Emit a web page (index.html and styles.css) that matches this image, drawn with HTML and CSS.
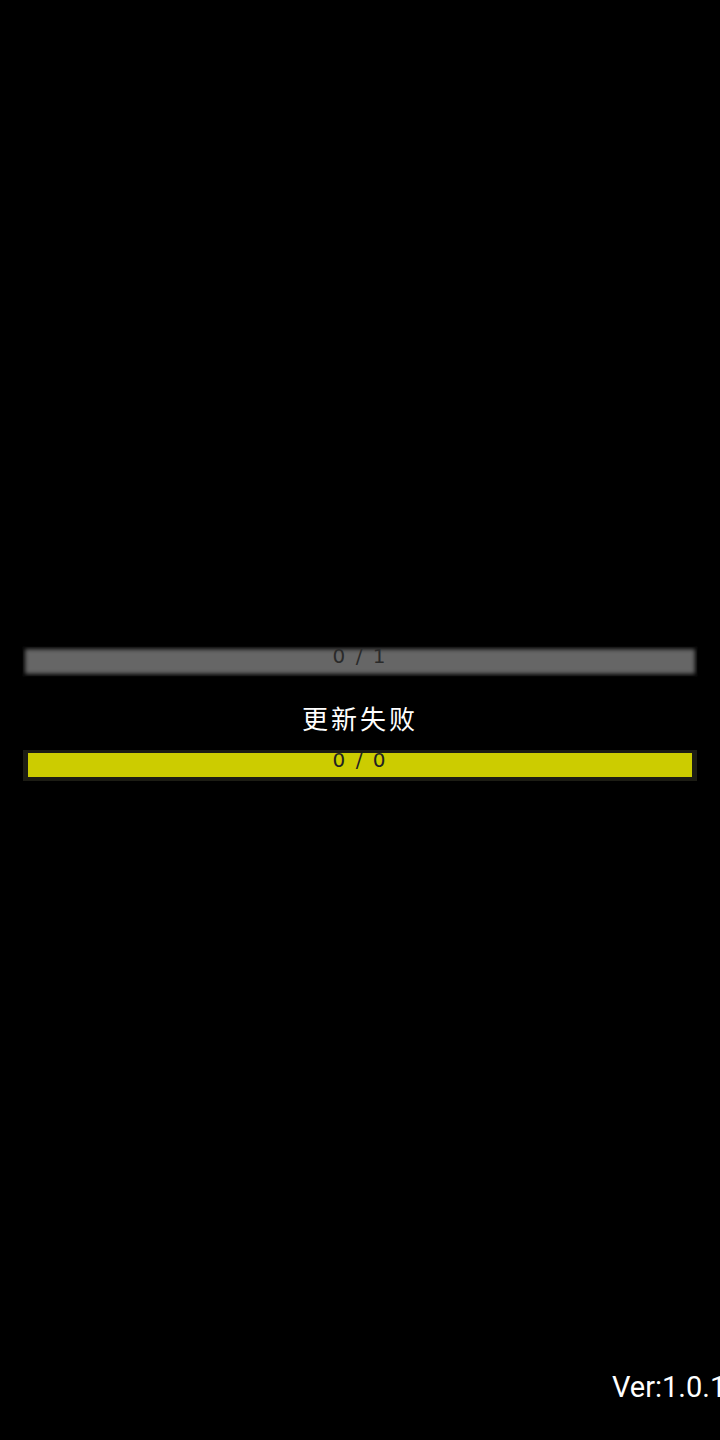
FILE: index.html
```html
<!DOCTYPE html>
<html lang="zh">
<head>
<meta charset="utf-8">
<link rel="stylesheet" href="styles.css">
</head>
<body>
<div class="screen">
  <div class="bar bar-gray"><span class="bar-label">0 / 1</span></div>
  <div class="title">更新失败</div>
  <div class="bar bar-frame"><div class="bar-fill"><span class="bar-label">0 / 0</span></div></div>
  <div class="spacer"></div>
  <div class="version">Ver:1.0.1</div>
</div>
</body>
</html>
```
FILE: styles.css
```css
html, body {
  margin: 0;
  padding: 0;
  background: #000;
}
.screen {
  width: 720px;
  height: 1440px;
  display: flex;
  flex-direction: column;
  padding-top: 647px;
  box-sizing: border-box;
  overflow: hidden;
}
.bar {
  margin: 0 23px;
  position: relative;
}
.bar-gray {
  height: 29px;
  background: #666666;
  box-shadow: inset 0 0 4px 2px #000, 0 0 1px #222;
  display: flex;
  justify-content: center;
}
.bar-label {
  font-family: "DejaVu Sans", sans-serif;
  font-size: 20px;
  line-height: 20px;
  letter-spacing: 2px;
  color: #2a2a2a;
  white-space: pre;
}
.bar-gray .bar-label {
  margin-top: -1px;
}
.title {
  margin-top: 24px;
  margin-bottom: 4px;
  text-align: center;
  font-family: "Noto Sans CJK SC", sans-serif;
  font-size: 26px;
  line-height: 36px;
  letter-spacing: 3px;
  color: #ffffff;
  font-weight: 400;
}
.bar-frame {
  margin-top: 10px;
  height: 31px;
  background: #1c1c14;
  padding: 3px 5px 4px 5px;
  box-sizing: border-box;
}
.bar-fill {
  height: 100%;
  background: #cccc00;
  display: flex;
  justify-content: center;
}
.bar-fill .bar-label {
  margin-top: -3px;
  color: #222;
}
.spacer {
  flex: 1;
}
.version {
  margin-left: 612px;
  margin-bottom: 38px;
  font-family: Roboto, sans-serif;
  font-size: 29px;
  line-height: 30px;
  color: #fff;
  white-space: nowrap;
}
```
